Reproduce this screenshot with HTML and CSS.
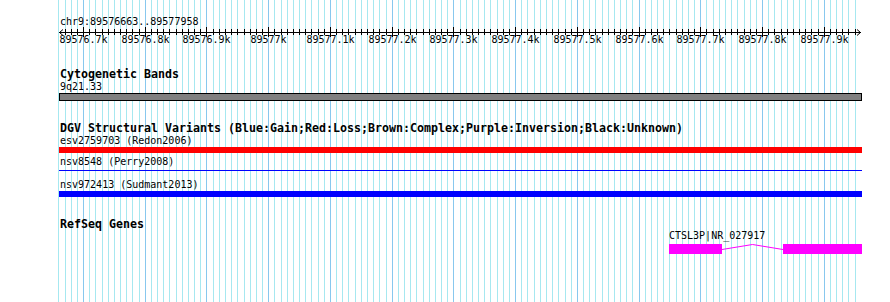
FILE: index.html
```html
<!DOCTYPE html>
<html lang="en">
<head>
  <meta charset="UTF-8" />
  <title>chr9:89576663..89577958</title>
  <link rel="stylesheet" href="styles.css">
</head>
<body>
  <div class="browser">
    <svg class="grid" id="grid" width="890" height="302"></svg>
    <div class="tracks">
      <div class="ruler">
        <div class="label">chr9:89576663..89577958</div>
        <svg class="scale" id="scale" width="803" height="21"></svg>
      </div>

      <section class="track cyto">
        <h2 class="title">Cytogenetic Bands</h2>
        <div class="label">9q21.33</div>
        <div class="band"></div>
      </section>

      <section class="track dgv">
        <h2 class="title">DGV Structural Variants (Blue:Gain;Red:Loss;Brown:Complex;Purple:Inversion;Black:Unknown)</h2>
        <div class="label">esv2759703 (Redon2006)</div>
        <div class="variant loss"></div>
        <div class="label next">nsv8548 (Perry2008)</div>
        <div class="variant thin"><div class="thin-line"></div></div>
        <div class="label next">nsv972413 (Sudmant2013)</div>
        <div class="variant gain"></div>
      </section>

      <section class="track refseq">
        <h2 class="title">RefSeq Genes</h2>
        <div class="gene-lane">
          <div class="gene" style="left: 610px;">
            <div class="label gene-name">CTSL3P|NR_027917</div>
            <svg class="gene-model" width="193" height="10">
              <rect x="0" y="0" width="53" height="10" fill="#ff00ff" />
              <polyline points="53,5.5 83.5,0.5 114,5.5" fill="none" stroke="#ff00ff" stroke-width="1" />
              <rect x="114" y="0" width="79" height="10" fill="#ff00ff" />
            </svg>
          </div>
        </div>
      </section>
    </div>
  </div>

  <script>
    const NS = 'http://www.w3.org/2000/svg';
    const viewStart = 89576663;
    const viewEnd = 89577958;
    const bpPx = 800 / 1296;
    const origin = 60.2;
    const trackLeft = 59;

    function px(bp) {
      return Math.round(origin + (bp - viewStart) * bpPx);
    }

    function line(svg, x1, y1, x2, y2, cls) {
      const l = document.createElementNS(NS, 'line');
      l.setAttribute('x1', x1);
      l.setAttribute('y1', y1);
      l.setAttribute('x2', x2);
      l.setAttribute('y2', y2);
      l.setAttribute('class', cls);
      svg.appendChild(l);
    }

    // background grid, one line every 10bp, darker every 100bp
    const grid = document.getElementById('grid');
    for (let bp = 89576660; bp <= viewEnd; bp += 10) {
      const x = px(bp) + 0.5;
      line(grid, x, 0, x, 302, bp % 100 === 0 ? 'major' : 'minor');
    }

    // ruler
    const scale = document.getElementById('scale');
    const axisY = 7.5;
    line(scale, 0, axisY, 802, axisY, 'axis');
    // arrow heads
    const arrows = document.createElementNS(NS, 'path');
    arrows.setAttribute('d', 'M4,4.5 L0.5,7.5 L4,10.5 M798,4.5 L801.5,7.5 L798,10.5');
    arrows.setAttribute('class', 'axis');
    scale.appendChild(arrows);

    for (let bp = 89576670; bp < viewEnd; bp += 10) {
      const x = px(bp) - trackLeft + 0.5;
      if (bp % 100 === 0) {
        line(scale, x, 2, x, 12, 'axis');
        const t = document.createElementNS(NS, 'text');
        t.setAttribute('x', x);
        t.setAttribute('y', 18);
        t.setAttribute('class', 'tick-label');
        const kb = (bp / 1000).toString();
        t.textContent = kb + 'k';
        scale.appendChild(t);
      } else {
        line(scale, x, 4, x, 10, 'axis');
      }
    }
  </script>
</body>
</html>
```

FILE: styles.css
```css
html, body {
  margin: 0;
  background: #ffffff;
}
.browser {
  position: relative;
  width: 890px;
  height: 302px;
  overflow: hidden;
  color: #000000;
}
.grid {
  position: absolute;
  top: 0;
  left: 0;
}
.grid .minor {
  stroke: #a6e8f0;
  stroke-width: 1;
}
.grid .major {
  stroke: #88c8ee;
  stroke-width: 1;
}
.tracks {
  position: relative;
  padding: 15px 0 0 59px;
  width: 803px;
}
.label {
  font-family: "DejaVu Sans Mono", monospace;
  font-size: 10px;
  line-height: 13px;
  white-space: nowrap;
}
.ruler .label {
  padding-left: 1px;
}
.scale {
  display: block;
  margin-top: -3px;
}
.scale .axis {
  stroke: #000000;
  stroke-width: 1;
  fill: none;
}
.tick-label {
  font-family: "DejaVu Sans Mono", monospace;
  font-size: 10px;
  text-anchor: middle;
  fill: #000000;
}
.title {
  margin: 0;
  padding-left: 1px;
  font-family: "DejaVu Sans Mono", monospace;
  font-weight: bold;
  font-size: 11.63px;
  line-height: 12px;
  white-space: nowrap;
}
.track .label {
  padding-left: 1px;
}
.track {
  margin-top: 21px;
}
.cyto {
  margin-top: 22px;
}
.band {
  height: 6px;
  border: 1px solid #000000;
  background: #808080;
}
.variant {
  height: 6px;
}
.variant.loss {
  background: #ff0000;
}
.variant.gain {
  background: #0000ff;
}
.thin-line {
  margin-top: 2px;
  height: 1px;
  background: #0000ff;
}
.label.next {
  margin-top: 2px;
}
.gene-lane {
  position: relative;
  height: 24px;
}
.gene {
  position: absolute;
  top: 0;
}
.gene .gene-name {
  padding-left: 0;
  line-height: 12px;
}
.gene-model {
  display: block;
  margin-top: 2px;
}
```
